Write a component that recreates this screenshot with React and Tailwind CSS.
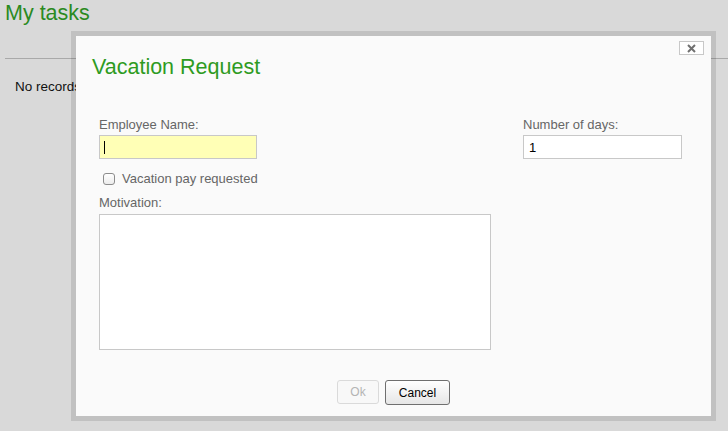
import { useState } from 'react';

export default function App() {
  // form state for the dialog
  const [name, setName] = useState('');
  const [days, setDays] = useState('1');
  const [pay, setPay] = useState(false);
  const [motivation, setMotivation] = useState('');

  return (
    <div className="relative w-[728px] h-[431px] overflow-hidden bg-[#d9d9d9] font-['Liberation_Sans',Arial,sans-serif]">
      {/* page behind the dialog */}
      <h1 className="pl-[5px] pt-[1px] text-[21.5px] leading-[24px] text-[#2b8a1f]">My tasks</h1>
      <div className="ml-[5px] mt-[33px] h-px bg-[#a9a9a9]" />
      <p className="pl-[15px] mt-[20px] text-[13.5px] leading-[16px] text-[#111]">No records found</p>

      {/* dialog, translucent frame lets the page show through */}
      <div className="absolute left-[71px] top-[31px] w-[645px] h-[390px] border-[5px] border-black/[0.11] bg-[#fafafa] bg-clip-padding">
        <button className="absolute top-[5px] right-[7px] w-[25px] h-[14px] flex items-center justify-center bg-white border border-[#c8c8c8]">
          <svg width="9" height="9" viewBox="0 0 9 9">
            <path d="M1 1 L8 8 M8 1 L1 8" stroke="#707070" strokeWidth="2" />
          </svg>
        </button>

        <h2 className="pl-[16px] pt-[19px] text-[21.5px] leading-[24px] text-[#2e9b22]">Vacation Request</h2>

        <div className="flex pl-[23px] mt-[38px] text-[13px] leading-[16px] text-[#666]">
          <div className="w-[392px] flex flex-col">
            <label>Employee Name:</label>
            <div className="relative mt-[2px] w-[158px] h-[24px]">
              <input
                value={name}
                onChange={(e) => setName(e.target.value)}
                className="w-full h-full px-[4px] bg-[#ffffb6] border border-[#c8c8c8] outline-none text-black"
              />
              {name === '' && <span className="absolute left-[5px] top-[6px] w-px h-[13px] bg-black" />}
            </div>
            <label className="flex items-center mt-[12px] h-[16px]">
              <input
                type="checkbox"
                checked={pay}
                onChange={(e) => setPay(e.target.checked)}
                className="appearance-none ml-[4px] w-[12px] h-[12px] rounded-[3px] border border-[#8c8c8c] bg-gradient-to-b from-white to-[#ececec]"
              />
              <span className="ml-[7px]">Vacation pay requested</span>
            </label>
            <label className="mt-[8px]">Motivation:</label>
            <textarea
              value={motivation}
              onChange={(e) => setMotivation(e.target.value)}
              className="mt-[3px] w-[392px] h-[136px] bg-white border border-[#c8c8c8] outline-none resize-none text-black"
            />
          </div>
          <div className="ml-[32px] w-[159px] flex flex-col">
            <label>Number of days:</label>
            <input
              value={days}
              onChange={(e) => setDays(e.target.value)}
              className="mt-[2px] w-[159px] h-[24px] px-[5px] bg-white border border-[#c8c8c8] outline-none text-black"
            />
          </div>
        </div>

        <div className="flex justify-center gap-[6px] mt-[30px] text-[12px]">
          <button disabled className="w-[42px] h-[24px] rounded-[3px] border border-[#dadada] bg-[#f8f8f8] text-[#b4b4b4]">
            Ok
          </button>
          <button className="w-[65px] h-[25px] rounded-[3px] border border-[#6f6f6f] bg-gradient-to-b from-white to-[#e6e6e6] text-black">
            Cancel
          </button>
        </div>
      </div>
    </div>
  );
}
